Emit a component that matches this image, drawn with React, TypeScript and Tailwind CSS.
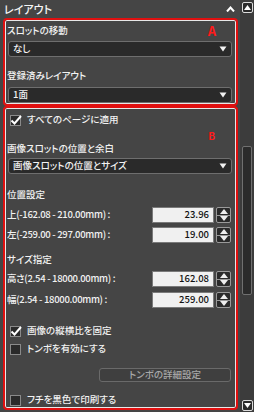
import React from "react";

const font = { fontFamily: '"Noto Sans CJK JP", "Noto Sans", sans-serif' };

function Select({ value }: { value: string }) {
  return (
    <div className="flex h-[16px] items-center justify-between rounded-[3px] border border-[#6e6e6e] bg-[#2a2a2a] pl-[4px] pr-[4px] text-[9.5px] font-medium leading-none text-[#f2f2f2]">
      <span>{value}</span>
      <svg width="8" height="6" viewBox="0 0 8 6">
        <path d="M0.5 0.5h7L4 5.5z" fill="#f2f2f2" />
      </svg>
    </div>
  );
}

function Checkbox({ checked, label }: { checked?: boolean; label: string }) {
  return (
    <div className="flex h-[12px] items-center gap-[6px] pl-[5px] text-[9.5px] font-medium leading-none text-[#f2f2f2]">
      <div className="relative h-[11px] w-[11px] border border-[#8a8a8a] bg-[#2a2a2a]">
        {checked && (
          <svg className="absolute left-[-1px] top-[-2px]" width="12" height="12" viewBox="0 0 12 12">
            <path d="M1.5 6.5l3 3L11 2" stroke="#fff" strokeWidth="2" fill="none" />
          </svg>
        )}
      </div>
      <span>{label}</span>
    </div>
  );
}

function Label({ text, className }: { text: string; className?: string }) {
  return (
    <div className={"h-[12px] pl-[2px] text-[9.5px] font-medium leading-[12px] text-[#f2f2f2] " + (className ?? "")}>
      {text}
    </div>
  );
}

function Spinner() {
  return (
    <div className="flex h-[16px] w-[15px] flex-col overflow-hidden rounded-[2px] border border-[#9a9a9a] bg-[#2a2a2a]">
      <div className="flex flex-1 items-center justify-center border-b border-[#9a9a9a]">
        <svg width="8" height="5" viewBox="0 0 8 5">
          <path d="M0 5h8L4 0z" fill="#eee" />
        </svg>
      </div>
      <div className="flex flex-1 items-center justify-center">
        <svg width="8" height="5" viewBox="0 0 8 5">
          <path d="M0 0h8L4 5z" fill="#eee" />
        </svg>
      </div>
    </div>
  );
}

function NumberRow({ label, value, className }: { label: string; value: string; className?: string }) {
  return (
    <div className={"flex h-[16px] items-center pl-[2px] pr-[5px] " + (className ?? "")}>
      <span className="flex-1 text-[9.5px] font-medium leading-none tracking-[-0.3px] text-[#f2f2f2]">{label}</span>
      <div className="flex h-[16px] w-[62px] items-center justify-end border border-[#7a7a7a] bg-[#f0f0f0] pr-[4px] text-[9.5px] font-medium leading-none text-[#111]">
        {value}
      </div>
      <div className="ml-[2px]">
        <Spinner />
      </div>
    </div>
  );
}

export default function App() {
  return (
    <div className="flex h-[412px] w-[254px] overflow-hidden bg-[#454545] [font-feature-settings:'palt']" style={font}>
      <div className="flex w-[240px] flex-col">
        {/* header */}
        <div className="flex h-[18px] items-center justify-between pl-[4px] pr-[5px] text-[11px] font-medium leading-none text-[#f5f5f5]">
          <span>レイアウト</span>
          <svg width="9" height="6" viewBox="0 0 9 6">
            <path d="M1 5.5L4.5 1.5 8 5.5" stroke="#fff" strokeWidth="2" fill="none" />
          </svg>
        </div>

        {/* A */}
        <div className="ml-[3px] mr-[2px] flex flex-col rounded-[4px] border-2 border-[#e01010] pb-[1px] shadow-[inset_0_0_0_1px_#e8e8e8]">
          <div className="mt-[4px] flex h-[12px] items-center justify-between pr-[20px]">
            <Label text="スロットの移動" />
            <span className="text-[13px] font-bold leading-none text-[#ff1a1a]">A</span>
          </div>
          <div className="mt-[5px] pl-[3px] pr-[4px]">
            <Select value="なし" />
          </div>
          <Label className="mt-[12px]" text="登録済みレイアウト" />
          <div className="mt-[6px] pl-[3px] pr-[4px]">
            <Select value="1面" />
          </div>
        </div>

        {/* B */}
        <div className="mb-[2px] ml-[3px] mr-[2px] flex flex-1 flex-col rounded-[4px] border-2 border-[#e01010] shadow-[inset_0_0_0_1px_#e8e8e8]">
          <div className="mt-[6px]">
            <Checkbox checked label="すべてのページに適用" />
          </div>
          <div className="mt-[5px] flex h-[9px] justify-end pr-[21px]">
            <span className="text-[10px] font-bold leading-[9px] text-[#ff1a1a]">B</span>
          </div>
          <Label className="mt-[2px]" text="画像スロットの位置と余白" />
          <div className="mt-[4px] pl-[3px] pr-[4px]">
            <Select value="画像スロットの位置とサイズ" />
          </div>
          <Label className="mt-[14px]" text="位置設定" />
          <NumberRow className="mt-[7px]" label="上(-162.08 - 210.00mm) :" value="23.96" />
          <NumberRow className="mt-[4px]" label="左(-259.00 - 297.00mm) :" value="19.00" />
          <Label className="mt-[10px]" text="サイズ指定" />
          <NumberRow className="mt-[6px]" label="高さ(2.54 - 18000.00mm) :" value="162.08" />
          <NumberRow className="mt-[5px]" label="幅(2.54 - 18000.00mm) :" value="259.00" />
          <div className="mt-[17px]">
            <Checkbox checked label="画像の縦横比を固定" />
          </div>
          <div className="mt-[6px]">
            <Checkbox label="トンボを有効にする" />
          </div>
          <div className="mt-[13px] flex justify-end pr-[5px]">
            <div className="flex h-[14px] w-[132px] items-center justify-center rounded-[3px] border border-[#6a6a6a] bg-[#3f3f3f] text-[9.5px] font-medium leading-none text-[#a8a8a8]">
              トンボの詳細設定
            </div>
          </div>
          <div className="mt-[12px]">
            <Checkbox label="フチを黒色で印刷する" />
          </div>
        </div>
      </div>

      {/* scrollbar */}
      <div className="flex w-[14px] flex-col items-center bg-[#3c3c3c] pt-[2px] pb-[1px]">
        <div className="flex h-[11px] w-[11px] items-center justify-center rounded-[2px] border border-[#dcdcdc] bg-[#2a2a2a]">
          <svg width="7" height="5" viewBox="0 0 7 5">
            <path d="M0 5h7L3.5 0z" fill="#fff" />
          </svg>
        </div>
        <div className="flex flex-1 flex-col pt-[133px] pb-[105px]">
          <div className="w-[10px] flex-1 rounded-[2px] border border-[#707070] bg-[#2b2b2b]" />
        </div>
        <div className="flex h-[11px] w-[11px] items-center justify-center rounded-[2px] border border-[#dcdcdc] bg-[#2a2a2a]">
          <svg width="7" height="5" viewBox="0 0 7 5">
            <path d="M0 0h7L3.5 5z" fill="#fff" />
          </svg>
        </div>
      </div>
    </div>
  );
}
